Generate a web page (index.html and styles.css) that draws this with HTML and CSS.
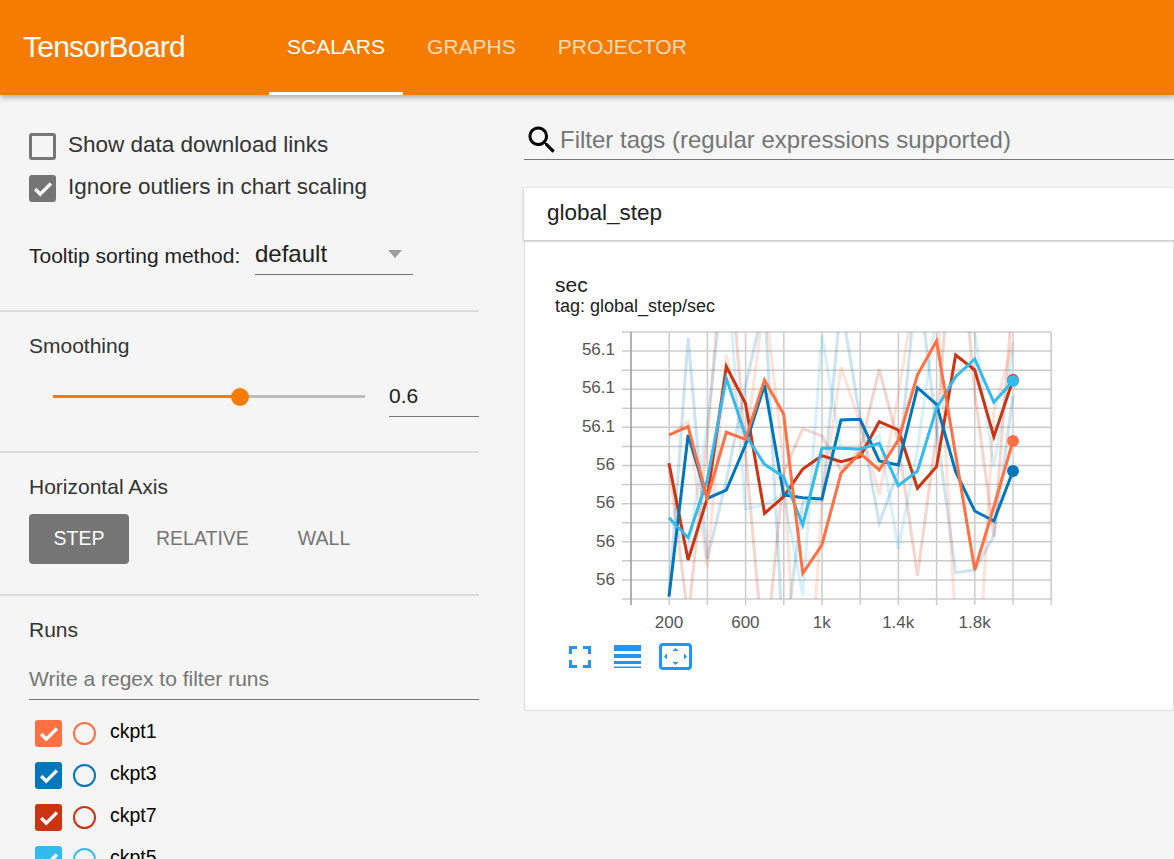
FILE: index.html
```html
<!DOCTYPE html>
<html lang="en">
<head>
    <meta charset="UTF-8">
    <title>TensorBoard</title>
    <link rel="stylesheet" href="styles.css">
</head>
<body>
<div class="toolbar">
    <div class="brand">TensorBoard</div>
    <div class="tabs">
        <div class="tab selected">SCALARS</div>
        <div class="tab">GRAPHS</div>
        <div class="tab">PROJECTOR</div>
    </div>
</div>
<div class="page">
    <div class="sidebar">
        <div class="section options">
            <div class="check-row">
                <span class="box"></span>
                <span class="check-label">Show data download links</span>
            </div>
            <div class="check-row">
                <span class="box checked">
                    <svg viewBox="0 0 24 24"><path d="M5.5 12.5l4.500 4.500 9.500-9.500" /></svg>
                </span>
                <span class="check-label">Ignore outliers in chart scaling</span>
            </div>
            <div class="sort-row">
                <span class="sort-label">Tooltip sorting method:</span>
                <div class="dropdown">
                    <span>default</span>
                    <span class="arrow"></span>
                </div>
            </div>
        </div>
        <div class="section smoothing">
            <div class="section-title">Smoothing</div>
            <div class="slider-row">
                <div class="slider">
                    <div class="slider-fill"></div>
                    <div class="slider-knob"></div>
                </div>
                <div class="slider-value">0.6</div>
            </div>
        </div>
        <div class="section axis">
            <div class="section-title">Horizontal Axis</div>
            <div class="axis-buttons">
                <div class="axis-btn active">STEP</div>
                <div class="axis-btn">RELATIVE</div>
                <div class="axis-btn">WALL</div>
            </div>
        </div>
        <div class="section runs">
            <div class="section-title">Runs</div>
            <div class="regex">Write a regex to filter runs</div>
            <div class="run-row">
                <span class="run-box c1"><svg viewBox="0 0 24 24"><path d="M5.5 12.5l4.500 4.500 9.500-9.500" /></svg></span>
                <span class="run-dot d1"></span>
                <span class="run-name">ckpt1</span>
            </div>
            <div class="run-row">
                <span class="run-box c3"><svg viewBox="0 0 24 24"><path d="M5.5 12.5l4.500 4.500 9.500-9.500" /></svg></span>
                <span class="run-dot d3"></span>
                <span class="run-name">ckpt3</span>
            </div>
            <div class="run-row">
                <span class="run-box c7"><svg viewBox="0 0 24 24"><path d="M5.5 12.5l4.500 4.500 9.500-9.500" /></svg></span>
                <span class="run-dot d7"></span>
                <span class="run-name">ckpt7</span>
            </div>
            <div class="run-row">
                <span class="run-box c5"><svg viewBox="0 0 24 24"><path d="M5.5 12.5l4.500 4.500 9.500-9.500" /></svg></span>
                <span class="run-dot d5"></span>
                <span class="run-name">ckpt5</span>
            </div>
        </div>
    </div>
    <div class="main">
        <div class="filter">
            <svg class="search-icon" viewBox="0 0 24 24"><path d="M15.5 14h-.79l-.28-.27C15.41 12.59 16 11.11 16 9.5 16 5.91 13.09 3 9.5 3S3 5.91 3 9.5 5.91 16 9.5 16c1.61 0 3.09-.59 4.23-1.57l.27.28v.79l5 4.99L20.49 19l-4.99-5zm-6 0C7.01 14 5 11.99 5 9.5S7.01 5 9.5 5 14 7.01 14 9.5 11.99 14 9.5 14z" /></svg>
            <span>Filter tags (regular expressions supported)</span>
        </div>
        <div class="pane-head">global_step</div>
        <div class="pane-body">
            <div class="chart-title">sec</div>
            <div class="chart-tag">tag: global_step/sec</div>
            <svg id="chart" class="chart" width="520" height="315" viewBox="555 320 520 315"></svg>
            <div class="chart-actions">
                <svg class="act-full" viewBox="0 0 22 22"><path d="M1.5 8V1.5H8M14 1.5h6.5V8M20.500 14v6.500H14M8 20.500H1.500V14" /></svg>
                <svg class="act-list" viewBox="0 0 27 23">
                    <rect x="0" y="0" width="27" height="6" />
                    <rect x="0" y="9" width="27" height="4" />
                    <rect x="0" y="16" width="27" height="3" />
                    <rect x="0" y="21.500" width="27" height="1.500" />
                </svg>
                <svg class="act-fit" viewBox="0 0 33 27">
                    <rect class="fit-frame" x="1.500" y="1.500" width="30" height="24" rx="2.500" />
                    <path d="M16.500 5l3 3h-6zM16.500 22l3-3h-6zM5 13.500l3-3v6zM28 13.500l-3-3v6z" />
                </svg>
            </div>
        </div>
    </div>
</div>
<script src="chart.js"></script>
</body>
</html>
```

FILE: styles.css
```css
*{
    margin: 0;
    padding: 0;
    box-sizing: border-box;
}
html,body{
    height: 100%;
    overflow: hidden;
}
body{
    background: #f5f5f5;
    font-family: "Liberation Sans", Arial, sans-serif;
    color: #212121;
}

.toolbar{
    display: flex;
    height: 95px;
    padding-left: 23px;
    background: #f57c00;
    color: #fff;
    box-shadow: 0 2px 6px rgba(0,0,0,.35);
    position: relative;
}
.brand{
    width: 246px;
    font-size: 30px;
    line-height: 94px;
    letter-spacing: -.75px;
}
.tabs{
    display: flex;
    gap: 6px;
}
.tab{
    padding: 0 18px;
    font-size: 21px;
    line-height: 94px;
    opacity: .7;
}
.tab.selected{
    opacity: 1;
    border-bottom: 3px solid #fff;
}

.page{
    display: flex;
}
.sidebar{
    width: 479px;
    flex: none;
}
.section{
    padding-left: 29px;
    border-bottom: 2px solid #ddd;
}
.options{
    height: 217px;
    padding-top: 38px;
}
.check-row{
    display: flex;
    align-items: center;
    gap: 12px;
    height: 27px;
    margin-bottom: 15px;
    font-size: 22.5px;
    color: #333;
}
.check-label{
    padding-bottom: 3px;
}
.box{
    width: 27px;
    height: 27px;
    border: 3px solid #757575;
    border-radius: 3px;
}
.box.checked{
    background: #757575;
}
.box svg,.run-box svg{
    display: block;
    fill: none;
    stroke: #fff;
    stroke-width: 3;
}
.box svg{
    width: 27px;
    height: 27px;
    margin: -3px;
}
.sort-row{
    display: flex;
    align-items: center;
    margin-top: 34px;
}
.sort-label{
    width: 226px;
    font-size: 21px;
    color: #212121;
}
.dropdown{
    display: flex;
    align-items: center;
    justify-content: space-between;
    width: 158px;
    height: 39px;
    padding: 0 11px 3px 0;
    border-bottom: 1.5px solid #757575;
    font-size: 24px;
}
.arrow{
    border-left: 7px solid transparent;
    border-right: 7px solid transparent;
    border-top: 8px solid #9e9e9e;
}

.section-title{
    font-size: 21px;
    color: #333;
}
.smoothing{
    height: 141px;
    padding-top: 22px;
}
.slider-row{
    display: flex;
    align-items: center;
    margin-top: 18.5px;
    padding-left: 24px;
}
.slider{
    position: relative;
    width: 312px;
    height: 3px;
    background: #bdbdbd;
}
.slider-fill{
    width: 187px;
    height: 3px;
    background: #f57c00;
}
.slider-knob{
    position: absolute;
    left: 178px;
    top: -7px;
    width: 18px;
    height: 18px;
    border-radius: 50%;
    background: #f57c00;
}
.slider-value{
    width: 90px;
    height: 40px;
    margin-left: 24px;
    border-bottom: 1.5px solid #757575;
    font-size: 21px;
    line-height: 38px;
}
.axis{
    height: 143px;
    padding-top: 22px;
}
.axis-buttons{
    display: flex;
    margin-top: 15px;
}
.axis-btn{
    height: 50px;
    padding: 0 25px;
    border-radius: 4px;
    font-size: 19.5px;
    line-height: 48px;
    color: #757575;
}
.axis-btn.active{
    width: 100px;
    margin-right: 2px;
    padding: 0;
    text-align: center;
    background: #757575;
    color: #fff;
}
.axis-btn:last-child{
    margin-left: -1px;
}
.runs{
    border-bottom: 0;
    padding-top: 22px;
}
.regex{
    height: 44px;
    margin-top: 14px;
    border-bottom: 1.5px solid #757575;
    font-size: 21px;
    line-height: 46px;
    color: #757575;
}
.run-row{
    display: flex;
    align-items: center;
    height: 27px;
    margin: 20px 0 15px 6px;
    font-size: 19.5px;
    color: #000;
}
.run-row + .run-row{
    margin-top: 0;
}
.run-name{
    padding-bottom: 4px;
}
.run-box{
    width: 27px;
    height: 27px;
    margin-right: 11px;
    border-radius: 3px;
}
.run-box svg{
    width: 27px;
    height: 27px;
}
.run-dot{
    width: 23px;
    height: 23px;
    margin-right: 14px;
    border: 2.500px solid;
    border-radius: 50%;
}
.c1{ background: #ff7043; }
.c3{ background: #0077bb; }
.c7{ background: #cc3311; }
.c5{ background: #33bbee; }
.d1{ border-color: #ff7043; }
.d3{ border-color: #0077bb; }
.d7{ border-color: #cc3311; }
.d5{ border-color: #33bbee; }

.main{
    flex: 1;
    min-width: 0;
    padding: 0 0 0 45px;
}
.filter{
    display: flex;
    align-items: center;
    height: 65px;
    margin-right: -10px;
    padding-top: 25px;
    border-bottom: 1.5px solid #757575;
    font-size: 24px;
    color: #757575;
    white-space: nowrap;
}
.search-icon{
    width: 36px;
    height: 36px;
    flex: none;
    margin-right: 0;
}
.pane-head{
    height: 52px;
    margin-top: 28px;
    padding-left: 23px;
    background: #fff;
    font-size: 22.5px;
    line-height: 50px;
    color: #212121;
    box-shadow: 0 1px 3px rgba(0,0,0,.3);
    position: relative;
}
.pane-body{
    height: 471px;
    padding: 33px 0 0 30px;
    background: #fff;
    border: 1.500px solid #ddd;
    border-top: 0;
    border-radius: 0 0 3px 3px;
}
.chart-title{
    font-size: 21px;
    line-height: 24px;
    color: #212121;
}
.chart-tag{
    font-size: 18px;
    line-height: 18px;
    color: #212121;
}
.chart{
    display: block;
    margin-top: 5px;
}
.grid{
    stroke: #ccc;
    stroke-width: 1.500;
}
.axis-line{
    stroke: #999;
    stroke-width: 1.500;
}
.tick-label{
    font-size: 17px;
    fill: #555;
}
.series{
    fill: none;
    stroke-width: 3;
    stroke-linejoin: miter;
}
.series.raw{
    opacity: .2;
}

.chart-actions{
    display: flex;
    align-items: center;
    gap: 23px;
    margin-top: 8px;
    padding-left: 14px;
}
.chart-actions svg{
    display: block;
    flex: none;
}
.act-full{
    width: 22px;
    height: 22px;
    fill: none;
    stroke: #2196f3;
    stroke-width: 3;
}
.act-list{
    width: 27px;
    height: 23px;
    fill: #2196f3;
}
.act-fit{
    width: 33px;
    height: 27px;
    margin-left: -5px;
    fill: #2196f3;
}
.fit-frame{
    fill: none;
    stroke: #2196f3;
    stroke-width: 3;
}
```

FILE: chart.js
```js
// values read off as smoothed pixel rows, raw lines come from undoing the 0.6 smoothing
var oChart = document.getElementById('chart');
var NS = 'http://www.w3.org/2000/svg';
var aRuns = [
    {color:'#cc3311', s:[415,705,520,125,235,565,515,432,392,410,395,290,315,490,425,90,135,335,165]},
    {color:'#0077bb', s:[815,330,520,495,360,180,510,518,522,285,283,408,420,188,238,440,558,588,438]},
    {color:'#33bbee', s:[578,638,465,160,330,418,455,600,370,370,372,355,482,438,250,155,102,232,168]},
    {color:'#ff7043', s:[330,305,520,322,343,165,268,745,660,445,385,435,345,150,48,390,735,545,348]}
];

function add(name, attrs, parent){
    var el = document.createElementNS(NS, name);
    for(var k in attrs){
        el.setAttribute(k, attrs[k]);
    }
    (parent || oChart).appendChild(el);
    return el;
}
function xAt(i){
    return 669 + 19.11 * i;
}
function yAt(z){
    return 325 + z / 3;
}
// undo the debiased exponential moving average
function rawOf(s){
    var prev = 0;
    return s.map(function(z, i){
        var b = z * (1 - Math.pow(0.6, i + 1));
        var r = (b - 0.6 * prev) / 0.4;
        prev = b;
        return r;
    });
}

var clip = add('clipPath', {id:'plot'});
add('rect', {x:631, y:332, width:420, height:267}, clip);

// grid
for(var r=0; r<15; r++){
    var gy = 332 + r * 19.07;
    add('line', {x1:622, x2:1051, y1:gy, y2:gy, 'class':'grid'});
}
for(var c=0; c<12; c++){
    var gx = 631 + c * 38.2;
    add('line', {x1:gx, x2:gx, y1:332, y2:605, 'class':c == 0 ? 'axis-line' : 'grid'});
}

// tick labels
var aY = ['56.1','56.1','56.1','56','56','56','56'];
for(var i=0; i<aY.length; i++){
    var t = add('text', {x:615, y:355 + i * 38.3, 'text-anchor':'end', 'class':'tick-label'});
    t.textContent = aY[i];
}
var aX = ['200','600','1k','1.4k','1.8k'];
for(var j=0; j<aX.length; j++){
    var l = add('text', {x:669 + j * 76.4, y:628, 'text-anchor':'middle', 'class':'tick-label'});
    l.textContent = aX[j];
}

// raw lines first, smoothed on top
var g = add('g', {'clip-path':'url(#plot)'});
aRuns.forEach(function(run){
    var pts = rawOf(run.s).map(function(z, i){
        return xAt(i) + ',' + yAt(z);
    });
    add('polyline', {points:pts.join(' '), stroke:run.color, 'class':'series raw'}, g);
});
aRuns.forEach(function(run){
    var pts = run.s.map(function(z, i){
        return xAt(i) + ',' + yAt(z);
    });
    add('polyline', {points:pts.join(' '), stroke:run.color, 'class':'series'}, g);
});
aRuns.forEach(function(run){
    add('circle', {cx:xAt(18), cy:yAt(run.s[18]), r:6, fill:run.color});
});
```
